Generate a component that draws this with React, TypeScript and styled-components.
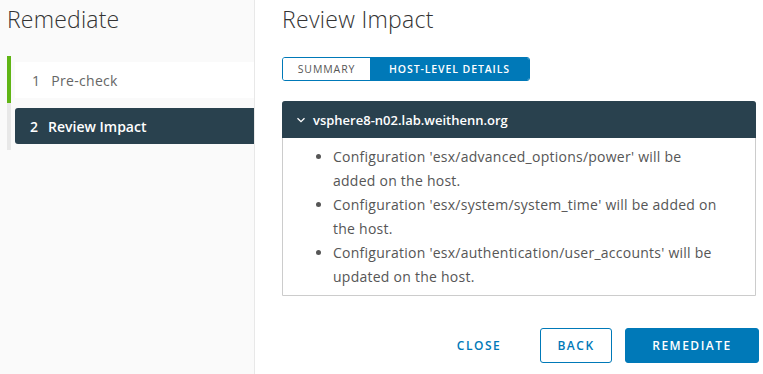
import React from "react";
import styled, { createGlobalStyle } from "styled-components";

const Global = createGlobalStyle`
  html, body { margin: 0; padding: 0; background: #fff; }
  body { font-family: "Open Sans", "Noto Sans", sans-serif; color: #565656; }
  * { box-sizing: border-box; }
`;

const Shell = styled.div`
  display: flex;
  width: 763px;
  height: 374px;
  overflow: hidden;
`;

const Sidebar = styled.nav`
  width: 255px;
  flex: none;
  background: #fafafa;
  border-right: 1px solid #e8e8e8;
  padding: 4px 0 0 7px;
`;

const SideTitle = styled.h2`
  margin: 0 0 0 0;
  font-weight: 300;
  font-size: 23px;
  line-height: 30px;
  letter-spacing: 0.2px;
  color: #333;
`;

const StepList = styled.ol`
  list-style: none;
  margin: 22px 0 0 0;
  padding: 0;
  display: flex;
  flex-direction: column;
`;

const Step = styled.li<{ $state: "done" | "active" }>`
  display: flex;
  padding-left: 4px;
  border-left: 4px solid ${(p) => (p.$state === "done" ? "#60b515" : "#e8e8e8")};
  padding-top: ${(p) => (p.$state === "done" ? "6px" : "5px")};
  padding-bottom: ${(p) => (p.$state === "done" ? "5px" : "6px")};
`;

const StepBox = styled.div<{ $active?: boolean }>`
  flex: 1;
  height: 36px;
  display: flex;
  align-items: center;
  gap: ${(p) => (p.$active ? "10px" : "11px")};
  padding-left: ${(p) => (p.$active ? "15px" : "17px")};
  background: ${(p) => (p.$active ? "#29414e" : "#fff")};
  color: ${(p) => (p.$active ? "#fff" : "#666")};
  font-weight: ${(p) => (p.$active ? 600 : 400)};
  font-size: 14px;
  letter-spacing: ${(p) => (p.$active ? "0" : "0.3px")};
  border-radius: ${(p) => (p.$active ? "3px 0 0 3px" : "0")};
`;

const Main = styled.main`
  flex: 1;
  display: flex;
  flex-direction: column;
  padding: 4px 4px 0 27px;
`;

const Title = styled.h1`
  margin: 0;
  font-weight: 300;
  font-size: 23px;
  line-height: 30px;
  letter-spacing: 0.3px;
  color: #333;
`;

const Tabs = styled.div`
  display: flex;
  align-self: flex-start;
  margin-top: 23px;
  border: 1px solid #0079b8;
  border-radius: 3px;
  overflow: hidden;
  height: 24px;
`;

const Tab = styled.button<{ $on?: boolean }>`
  border: 0;
  margin: 0;
  font-family: inherit;
  font-size: 10.5px;
  font-weight: ${(p) => (p.$on ? 600 : 400)};
  letter-spacing: 0.9px;
  text-transform: uppercase;
  height: 22px;
  padding: 0;
  background: ${(p) => (p.$on ? "#0079b8" : "#fff")};
  color: ${(p) => (p.$on ? "#fff" : "#565656")};
  width: ${(p) => (p.$on ? "159px" : "87px")};
`;

const Card = styled.section`
  margin-top: 20px;
  border: 1px solid #ccc;
  border-radius: 3px 3px 0 0;
  width: 474px;
`;

const CardHead = styled.div`
  height: 37px;
  background: #29414e;
  color: #fff;
  display: flex;
  align-items: center;
  gap: 7px;
  padding-left: 14px;
  font-weight: 600;
  font-size: 13px;
  margin: -1px -1px 0 -1px;
  border-radius: 3px 3px 0 0;
`;

const Items = styled.ul`
  margin: 0;
  padding: 7px 34px 6px 50px;
  font-size: 14px;
  line-height: 24px;
  letter-spacing: 0.25px;
  color: #565656;
`;

const Footer = styled.div`
  margin-top: auto;
  display: flex;
  justify-content: flex-end;
  align-items: center;
  gap: 13px;
  padding: 0 0 11px 0;
`;

const Btn = styled.button<{ $kind: "flat" | "outline" | "solid" }>`
  font-family: inherit;
  height: 35px;
  border-radius: 3px;
  font-size: 12px;
  font-weight: 600;
  letter-spacing: 1.5px;
  text-transform: uppercase;
  cursor: pointer;
  padding: 0;
  border: 1px solid ${(p) => (p.$kind === "flat" ? "transparent" : "#0079b8")};
  background: ${(p) => (p.$kind === "solid" ? "#0079b8" : "transparent")};
  color: ${(p) => (p.$kind === "solid" ? "#fff" : "#0079b8")};
  width: ${(p) => (p.$kind === "solid" ? "134px" : p.$kind === "outline" ? "72px" : "96px")};
`;

const Chevron = () => (
  <svg width="10" height="10" viewBox="0 0 10 10" fill="none">
    <path d="M1.5 3.2 L5 6.7 L8.5 3.2" stroke="#fff" strokeWidth="1.3" />
  </svg>
);

export default function App() {
  return (
    <>
      <Global />
      <Shell>
        <Sidebar>
          <SideTitle>Remediate</SideTitle>
          <StepList>
            <Step $state="done">
              <StepBox>
                <span>1</span>
                <span>Pre-check</span>
              </StepBox>
            </Step>
            <Step $state="active">
              <StepBox $active>
                <span>2</span>
                <span>Review Impact</span>
              </StepBox>
            </Step>
          </StepList>
        </Sidebar>
        <Main>
          <Title>Review Impact</Title>
          <Tabs>
            <Tab>Summary</Tab>
            <Tab $on>Host-Level Details</Tab>
          </Tabs>
          <Card>
            <CardHead>
              <Chevron />
              <span>vsphere8-n02.lab.weithenn.org</span>
            </CardHead>
            <Items>
              <li>Configuration 'esx/advanced_options/power' will be added on the host.</li>
              <li>Configuration 'esx/system/system_time' will be added on the host.</li>
              <li>Configuration 'esx/authentication/user_accounts' will be updated on the host.</li>
            </Items>
          </Card>
          <Footer>
            <Btn $kind="flat">Close</Btn>
            <Btn $kind="outline">Back</Btn>
            <Btn $kind="solid">Remediate</Btn>
          </Footer>
        </Main>
      </Shell>
    </>
  );
}
